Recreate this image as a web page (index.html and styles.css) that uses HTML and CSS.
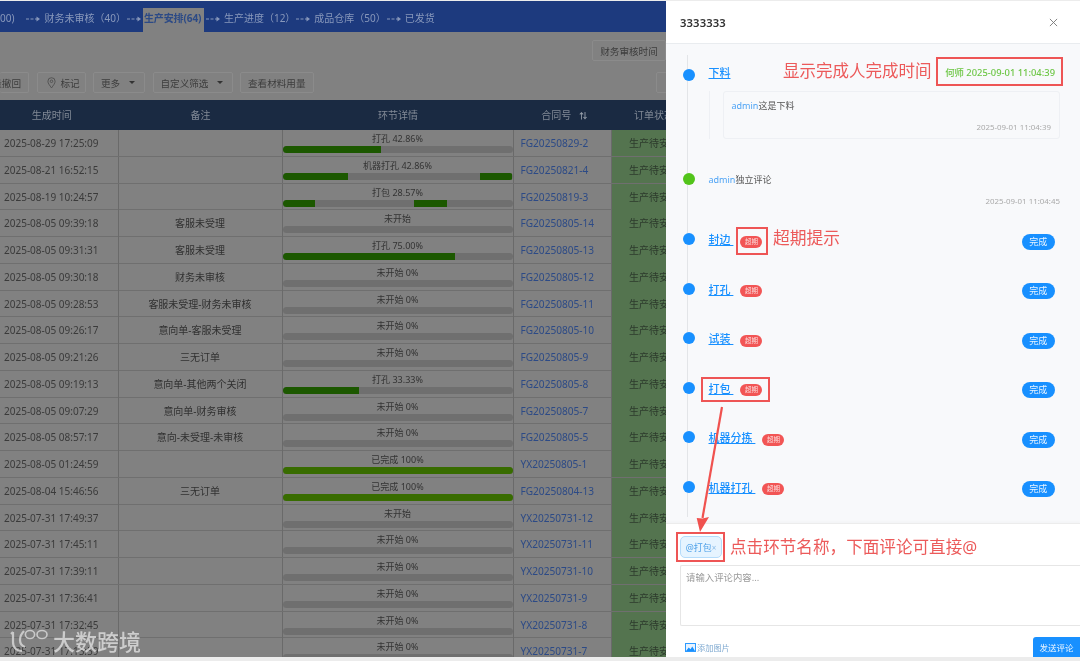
FILE: index.html
```html
<!DOCTYPE html>
<html lang="zh-CN">
<head>
<meta charset="utf-8">
<title>生产安排</title>
<link rel="stylesheet" href="styles.css">
</head>
<body>
<svg class="sprite" width="0" height="0"><defs><g id="flow-arrow"><path d="M0 3h3M4.5 3h3M9 3h2.5" stroke="currentColor" stroke-width="1" fill="none"/><path d="M10.5 .6L14 3l-3.5 2.4z" fill="currentColor"/></g></defs></svg>
<div class="page">
  <main class="main">
    <nav class="flow">
      <span class="step">00)</span><svg class="arrow lead" viewBox="0 0 14 6" width="14" height="6"><use href="#flow-arrow"/></svg>
      <span class="step">财务未审核（40）</span><svg class="arrow" viewBox="0 0 14 6" width="14" height="6"><use href="#flow-arrow"/></svg>
      <span class="step active">生产安排(64)</span><svg class="arrow tight" viewBox="0 0 14 6" width="14" height="6"><use href="#flow-arrow"/></svg>
      <span class="step">生产进度（12）</span><svg class="arrow" viewBox="0 0 14 6" width="14" height="6"><use href="#flow-arrow"/></svg>
      <span class="step">成品仓库（50）</span><svg class="arrow" viewBox="0 0 14 6" width="14" height="6"><use href="#flow-arrow"/></svg>
      <span class="step">已发货</span>
    </nav>
    <div class="filter-row"><button class="btn">财务审核时间</button></div>
    <div class="tools">
      <button class="btn first">量撤回</button>
      <button class="btn mark"><svg class="pin" viewBox="0 0 10 13" width="9" height="12"><path d="M5 12C3 9 1 7 1 4.6a4 4 0 0 1 8 0C9 7 7 9 5 12z" fill="none" stroke="#4a4a4a" stroke-width=".9"/><circle cx="5" cy="4.6" r="1.4" fill="none" stroke="#4a4a4a" stroke-width=".9"/></svg>标记</button>
      <button class="btn more">更多<i class="caret"></i></button>
      <button class="btn custom">自定义筛选<i class="caret"></i></button>
      <button class="btn">查看材料用量</button>
      <button class="btn stub"></button>
    </div>
    <section class="grid">
      <div class="row head"><div class="h-time">生成时间</div><div>备注</div><div>环节详情</div><div class="h-no">合同号<b class="sort">⇅</b></div><div class="h-state">订单状态</div></div>

      <div class="row"><div class="c-time">2025-08-29 17:25:09</div><div></div><div class="c-prog"><span class="p-label">打孔 42.86%</span><div class="track"><i class="seg" style="left:0;width:42.86%"></i></div></div><div class="c-no">FG20250829-2</div><div class="c-state">生产待安排</div></div>
      <div class="row"><div class="c-time">2025-08-21 16:52:15</div><div></div><div class="c-prog"><span class="p-label">机器打孔 42.86%</span><div class="track"><i class="seg" style="left:0;width:28.6%"></i><i class="seg" style="left:85.7%;width:14.3%"></i></div></div><div class="c-no">FG20250821-4</div><div class="c-state">生产待安排</div></div>
      <div class="row"><div class="c-time">2025-08-19 10:24:57</div><div></div><div class="c-prog"><span class="p-label">打包 28.57%</span><div class="track"><i class="seg" style="left:0;width:14.3%"></i><i class="seg" style="left:57.1%;width:14.3%"></i></div></div><div class="c-no">FG20250819-3</div><div class="c-state">生产待安排</div></div>
      <div class="row"><div class="c-time">2025-08-05 09:39:18</div><div class="c-note">客服未受理</div><div class="c-prog"><span class="p-label">未开始</span><div class="track"></div></div><div class="c-no">FG20250805-14</div><div class="c-state">生产待安排</div></div>
      <div class="row"><div class="c-time">2025-08-05 09:31:31</div><div class="c-note">客服未受理</div><div class="c-prog"><span class="p-label">打孔 75.00%</span><div class="track"><i class="seg" style="left:0;width:75%"></i></div></div><div class="c-no">FG20250805-13</div><div class="c-state">生产待安排</div></div>
      <div class="row"><div class="c-time">2025-08-05 09:30:18</div><div class="c-note">财务未审核</div><div class="c-prog"><span class="p-label">未开始 0%</span><div class="track"></div></div><div class="c-no">FG20250805-12</div><div class="c-state">生产待安排</div></div>
      <div class="row"><div class="c-time">2025-08-05 09:28:53</div><div class="c-note">客服未受理-财务未审核</div><div class="c-prog"><span class="p-label">未开始 0%</span><div class="track"></div></div><div class="c-no">FG20250805-11</div><div class="c-state">生产待安排</div></div>
      <div class="row"><div class="c-time">2025-08-05 09:26:17</div><div class="c-note">意向单-客服未受理</div><div class="c-prog"><span class="p-label">未开始 0%</span><div class="track"></div></div><div class="c-no">FG20250805-10</div><div class="c-state">生产待安排</div></div>
      <div class="row"><div class="c-time">2025-08-05 09:21:26</div><div class="c-note">三无订单</div><div class="c-prog"><span class="p-label">未开始 0%</span><div class="track"></div></div><div class="c-no">FG20250805-9</div><div class="c-state">生产待安排</div></div>
      <div class="row"><div class="c-time">2025-08-05 09:19:13</div><div class="c-note">意向单-其他两个关闭</div><div class="c-prog"><span class="p-label">打孔 33.33%</span><div class="track"><i class="seg" style="left:0;width:33.33%"></i></div></div><div class="c-no">FG20250805-8</div><div class="c-state">生产待安排</div></div>
      <div class="row"><div class="c-time">2025-08-05 09:07:29</div><div class="c-note">意向单-财务审核</div><div class="c-prog"><span class="p-label">未开始 0%</span><div class="track"></div></div><div class="c-no">FG20250805-7</div><div class="c-state">生产待安排</div></div>
      <div class="row"><div class="c-time">2025-08-05 08:57:17</div><div class="c-note">意向-未受理-未审核</div><div class="c-prog"><span class="p-label">未开始 0%</span><div class="track"></div></div><div class="c-no">FG20250805-5</div><div class="c-state">生产待安排</div></div>
      <div class="row"><div class="c-time">2025-08-05 01:24:59</div><div></div><div class="c-prog"><span class="p-label">已完成 100%</span><div class="track"><i class="seg done" style="left:0;width:100%"></i></div></div><div class="c-no">YX20250805-1</div><div class="c-state">生产待安排</div></div>
      <div class="row"><div class="c-time">2025-08-04 15:46:56</div><div class="c-note">三无订单</div><div class="c-prog"><span class="p-label">已完成 100%</span><div class="track"><i class="seg done" style="left:0;width:100%"></i></div></div><div class="c-no">FG20250804-13</div><div class="c-state">生产待安排</div></div>
      <div class="row"><div class="c-time">2025-07-31 17:49:37</div><div></div><div class="c-prog"><span class="p-label">未开始</span><div class="track"></div></div><div class="c-no">YX20250731-12</div><div class="c-state">生产待安排</div></div>
      <div class="row"><div class="c-time">2025-07-31 17:45:11</div><div></div><div class="c-prog"><span class="p-label">未开始 0%</span><div class="track"></div></div><div class="c-no">YX20250731-11</div><div class="c-state">生产待安排</div></div>
      <div class="row"><div class="c-time">2025-07-31 17:39:11</div><div></div><div class="c-prog"><span class="p-label">未开始 0%</span><div class="track"></div></div><div class="c-no">YX20250731-10</div><div class="c-state">生产待安排</div></div>
      <div class="row"><div class="c-time">2025-07-31 17:36:41</div><div></div><div class="c-prog"><span class="p-label">未开始 0%</span><div class="track"></div></div><div class="c-no">YX20250731-9</div><div class="c-state">生产待安排</div></div>
      <div class="row"><div class="c-time">2025-07-31 17:32:45</div><div></div><div class="c-prog"><span class="p-label">未开始 0%</span><div class="track"></div></div><div class="c-no">YX20250731-8</div><div class="c-state">生产待安排</div></div>
      <div class="row"><div class="c-time">2025-07-31 17:15:59</div><div></div><div class="c-prog"><span class="p-label">未开始 0%</span><div class="track"></div></div><div class="c-no">YX20250731-7</div><div class="c-state">生产待安排</div></div>
    </section>
    <div class="watermark">
      <svg class="wm-logo" viewBox="0 0 40 26" width="40" height="26"><g fill="none" stroke="#d6d6d6" stroke-width="2.2" opacity=".85"><path d="M3 4v10c0 6 4 9 9 9"/><path d="M3 4l-2 2"/><path d="M14 3c-3 3-4 6-4 9 0 4 2 6 5 7"/><ellipse cx="20" cy="6.5" rx="4.6" ry="4" stroke-width="1.6"/><ellipse cx="32" cy="6.5" rx="5" ry="4" stroke-width="1.6"/></g></svg>
      <span class="wm-text">大数跨境</span>
    </div>
  </main>

  <aside class="drawer">
    <header class="d-head"><span class="d-title">3333333</span><svg class="d-close" viewBox="0 0 10 10" width="9" height="9"><path d="M1 1l8 8M9 1l-8 8" stroke="#777" stroke-width="1" fill="none"/></svg></header>
    <div class="d-body">
      <div class="timeline">
        <div class="tl-item first">
          <i class="dot"></i>
          <div class="tl-row"><a class="tl-name">下料</a><span class="done-by">何师 2025-09-01 11:04:39</span></div>
          <div class="c-wrap"><div class="c-box"><p class="c-line"><span class="who">admin</span>这是下料</p><p class="c-ts">2025-09-01 11:04:39</p></div></div>
        </div>
        <div class="tl-item second">
          <i class="dot green"></i>
          <div class="tl-row"><p class="c-line"><span class="who">admin</span>独立评论</p></div>
          <p class="c-ts free">2025-09-01 11:04:45</p>
        </div>
        <div class="tl-item"><i class="dot"></i><div class="tl-row"><a class="tl-name">封边&nbsp;</a><span class="late">超期</span><button class="finish">完成</button></div></div>
        <div class="tl-item"><i class="dot"></i><div class="tl-row"><a class="tl-name">打孔&nbsp;</a><span class="late">超期</span><button class="finish">完成</button></div></div>
        <div class="tl-item"><i class="dot"></i><div class="tl-row"><a class="tl-name">试装&nbsp;</a><span class="late">超期</span><button class="finish">完成</button></div></div>
        <div class="tl-item"><i class="dot"></i><div class="tl-row"><a class="tl-name">打包&nbsp;</a><span class="late">超期</span><button class="finish">完成</button></div></div>
        <div class="tl-item"><i class="dot"></i><div class="tl-row"><a class="tl-name">机器分拣&nbsp;</a><span class="late">超期</span><button class="finish">完成</button></div></div>
        <div class="tl-item"><i class="dot"></i><div class="tl-row"><a class="tl-name">机器打孔&nbsp;</a><span class="late">超期</span><button class="finish">完成</button></div></div>
      </div>
    </div>
    <footer class="composer">
      <div class="tags"><span class="at-tag">@打包<small>×</small></span></div>
      <div class="input">请输入评论内容...</div>
      <div class="c-actions">
        <span class="add-img"><svg viewBox="0 0 12 10" width="11" height="9"><rect x=".5" y=".5" width="11" height="9" fill="#e8f3ff" stroke="#1890ff"/><path d="M1 9l3-4 2 2 2-3 3 5z" fill="#1890ff"/></svg>添加图片</span>
        <button class="send">发送评论</button>
      </div>
    </footer>
  </aside>

  <div class="annot a-text a1">显示完成人完成时间</div>
  <div class="annot a-box b1"></div>
  <div class="annot a-text a2">超期提示</div>
  <div class="annot a-box b2"></div>
  <div class="annot a-box b3"></div>
  <div class="annot a-box b4"></div>
  <div class="annot a-text a3">点击环节名称，下面评论可直接@</div>
  <svg class="annot arrow-svg" viewBox="0 0 60 130" width="60" height="130"><path d="M44 2L24.5 113" stroke="#f0524f" stroke-width="2.2" fill="none"/><path d="M22 127L18.7 113 24.5 113.5 31 112z" fill="#f0524f"/></svg>
</div>
</body>
</html>
```
FILE: styles.css
```css
* { box-sizing: border-box; }
html, body { margin: 0; padding: 0; }
body {
  font-family: "Noto Sans", "Noto Sans CJK SC", sans-serif;
  font-size: 10px;
  color: #333;
  background: #fff;
}
p { margin: 0; }
button { font-family: inherit; }
.sprite { position: absolute; }

.page {
  position: relative;
  width: 1080px;
  height: 661px;
  overflow: hidden;
  padding: 1px 0 4px;
  background: #ececec;
  filter: blur(.35px);
}
.main {
  position: relative;
  height: 656px;
  overflow: hidden;
  background: #818181;
}

/* flow bar */
.flow {
  height: 31px;
  display: flex;
  align-items: flex-end;
  background: #1d3a7e;
  color: #8898bb;
  font-size: 10px;
  white-space: nowrap;
}
.step { height: 24px; line-height: 20px; }
.arrow { flex: none; margin: 0 4px 10px 1px; color: #8898bb; }
.arrow.lead { margin-left: 12px; }
.arrow.tight { margin-left: 2px; }
.step.active {
  background: #818181;
  color: #2c4a86;
  font-weight: 700;
  padding: 0 1px;
  width: 61px;
  margin-left: -2px;
  letter-spacing: -.1px;
}

/* toolbar */
.filter-row { height: 39px; display: flex; justify-content: flex-end; align-items: flex-end; padding-bottom: 10px; padding-top: 7px; }
.btn {
  height: 21px;
  padding: 0 7px;
  display: inline-flex;
  align-items: center;
  background: #818181;
  border: 1px solid #8b8b8b;
  border-radius: 2px;
  color: #3c3c3c;
  font-size: 9.6px;
  white-space: nowrap;
}
.filter-row .btn { width: 74px; justify-content: center; margin-right: 414px; }
.tools { height: 29px; display: flex; gap: 7.5px; padding-top: 1px; }
.tools .first { width: 29px; padding: 0 7px 0 0; justify-content: flex-end; border-left: 0; overflow: hidden; }
.tools .mark { width: 49px; padding-left: 9px; gap: 5px; }
.tools .more { width: 52px; padding-left: 7px; }
.tools .custom { width: 80px; padding-left: 7px; }
.tools .stub { width: 20px; margin-left: 335px; }
.pin { flex: none; }
.caret { width: 0; height: 0; border: 3px solid transparent; border-top: 3px solid #333; border-bottom: 0; margin-left: auto; margin-right: 2px; }

/* table */
.row {
  display: grid;
  grid-template-columns: 118.5px 164px 231px 98.5px 120px;
  height: 26.75px;
  border-bottom: 1px solid #6f6f6f;
  background: #818181;
}
.row > div { border-right: 1px solid #6a6a6a; min-width: 0; }
.row > div:last-child { border-right: 0; }
.head {
  height: 30px;
  background: #1a2a42;
  color: #828a96;
  border-bottom: 0;
  line-height: 30px;
  text-align: center;
}
.head > div { border-right: 0; }
.h-time { padding-right: 15px; }
.h-no { padding-left: 3px; }
.sort { margin-left: 8px; font-size: 8px; color: #9aa2ad; }
.h-state { text-align: left; padding-left: 22px; }
.c-time { padding-left: 4px; line-height: 26px; font-size: 10px; color: #3a3a3a; }
.c-note { text-align: center; line-height: 27px; color: #303030; }
.c-no { padding-left: 7px; line-height: 26px; color: #2c4a86; font-size: 10.1px; }
.c-state { background: #54744f; padding-left: 17px; line-height: 26px; color: #2c3a2c; }
.c-prog { text-align: center; position: relative; font-size: 9px; color: #333; }
.p-label { display: block; height: 15px; line-height: 17px; }
.track { position: relative; height: 7px; margin-top: 1px; border-radius: 4px; background: #6f6f6f; overflow: hidden; }
.seg { position: absolute; top: 0; bottom: 0; background: #1c5800; }
.seg.done { background: #386c00; }

/* watermark */
.watermark { position: absolute; left: 10px; top: 626px; display: flex; align-items: center; gap: 3px; height: 28px; }
.wm-text { font-size: 22px; font-weight: 500; color: rgba(222,222,222,.82); line-height: 26px; }

/* drawer */
.drawer {
  position: absolute;
  top: 1px;
  right: 0;
  bottom: 4px;
  width: 414px;
  display: flex;
  flex-direction: column;
  background: #fff;
}
.d-head {
  height: 43px;
  flex: none;
  display: flex;
  align-items: center;
  justify-content: space-between;
  padding: 0 22px 0 14px;
  border-bottom: 1px solid #e9ecef;
}
.d-title { font-size: 11.3px; font-weight: 600; color: #333; letter-spacing: .1px; }
.d-body { flex: none; height: 479px; background: #f8f9fb; overflow: hidden; padding: 11px 20px 0 21px; }
.timeline { display: flex; flex-direction: column; height: 100%; }
.tl-item { position: relative; flex: none; height: 49.5px; border-left: 1.5px solid #e3e5e8; padding-left: 20.5px; }
.tl-item.first { height: 105px; }
.tl-item.second { height: 60px; }
.dot { position: absolute; left: -5.5px; top: 13px; width: 12px; height: 12px; border-radius: 50%; background: #1890ff; }
.first .dot { top: 14px; }
.dot.green { background: #52c41a; }
.tl-row { height: 38px; display: flex; align-items: center; padding-right: 5px; }
.first .tl-row { height: 34px; }
.tl-name { font-size: 11px; font-weight: 500; color: #1890ff; text-decoration: underline; white-space: pre; }
.done-by { margin-left: auto; font-size: 9.4px; font-weight: 500; color: #6cc644; }
.c-wrap { border-left: 1px solid #eef0f4; padding-left: 13px; margin-top: 2px; }
.c-box { height: 48px; border: 1px solid #eef0f4; border-radius: 3px; padding: 7px 8px 0 8px; }
.c-line { font-size: 9px; line-height: 13px; color: #555; }
.who { color: #4da3f5; }
.c-ts { font-size: 7.9px; line-height: 12px; color: #aaa; text-align: right; margin-top: 9px; }
.c-ts.free { margin-top: -3px; }
.late {
  width: 22px;
  height: 12px;
  margin: 5px 0 0 7px;
  border-radius: 6px;
  background: #f25555;
  color: #fbdada;
  font-size: 6.5px;
  line-height: 12px;
  text-align: center;
}
.finish {
  margin: 5px 0 0 auto;
  width: 33.5px;
  height: 16px;
  padding: 0;
  border: 0;
  border-radius: 8px;
  background: #1890ff;
  color: #e8f4ff;
  font-size: 9px;
  line-height: 16px;
}

/* composer */
.composer { flex: 1; min-height: 0; padding: 12px 0 0 14px; background: #fff; border-top: 1px solid #ececec; box-shadow: 0 -2px 2px rgba(0,0,0,.02); }
.tags { height: 29px; }
.at-tag {
  display: inline-flex;
  align-items: center;
  justify-content: center;
  width: 42px;
  height: 22px;
  border: 1px solid #b5dcfb;
  border-radius: 5px;
  background: #e6f4ff;
  color: #4b9fe8;
  font-size: 9px;
}
.at-tag small { font-size: 8px; color: #8bbde8; }
.input { height: 61px; padding: 5px 5px; border: 1px solid #e6e6e6; border-right: 0; border-radius: 2px 0 0 2px; color: #999; font-size: 9.4px; line-height: 13px; }
.c-actions { height: 31px; display: flex; align-items: flex-end; justify-content: space-between; }
.add-img { display: inline-flex; align-items: center; font-size: 8.2px; color: #7fa9d0; height: 20px; margin-left: 5px; }
.add-img svg { margin-right: 1px; }
.send { width: 47px; height: 20px; border: 0; padding: 0; border-radius: 3px 0 0 0; background: #1890ff; color: #e8f4ff; font-size: 8.5px; }

/* annotations lying over the screenshot */
.annot { position: absolute; }
.a-text { color: #ec5a5a; font-size: 16.5px; line-height: 20px; white-space: nowrap; }
.a1 { left: 783px; top: 61px; }
.a2 { left: 773px; top: 228px; font-size: 16.8px; }
.a3 { left: 730px; top: 537px; font-size: 16.6px; }
.a-box { border: 2px solid #ee5555; }
.b1 { left: 936px; top: 57px; width: 127px; height: 29px; }
.b2 { left: 736px; top: 227px; width: 32px; height: 28px; }
.b3 { left: 701px; top: 377px; width: 69px; height: 25px; }
.b4 { left: 676px; top: 532px; width: 49px; height: 30px; }
.arrow-svg { left: 678px; top: 405px; }
```
